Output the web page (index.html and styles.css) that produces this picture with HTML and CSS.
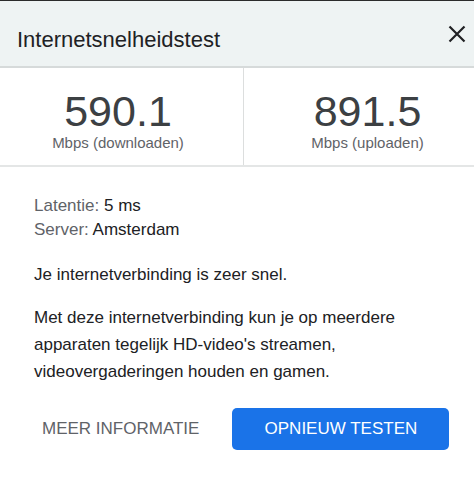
FILE: index.html
```html
<!DOCTYPE html>
<html lang="nl">
<head>
<meta charset="utf-8">
<title>Internetsnelheidstest</title>
<link rel="stylesheet" href="styles.css">
</head>
<body>
<div class="topbar"></div>
<div class="dialog">
  <header class="header">
    <h1 class="title">Internetsnelheidstest</h1>
    <button class="close" aria-label="Sluiten">
      <svg width="18" height="18" viewBox="0 0 18 18"><path d="M1.5 1.5 L16.5 16.5 M16.5 1.5 L1.5 16.5" stroke="#202124" stroke-width="2.2" fill="none"/></svg>
    </button>
  </header>
  <section class="stats">
    <div class="stat stat-down">
      <div class="value">590.1</div>
      <div class="unit">Mbps (downloaden)</div>
    </div>
    <div class="stat stat-up">
      <div class="value">891.5</div>
      <div class="unit">Mbps (uploaden)</div>
    </div>
  </section>
  <section class="content">
    <div class="info">
      <div><span class="label">Latentie:</span> 5 ms</div>
      <div><span class="label">Server:</span> Amsterdam</div>
    </div>
    <p class="verdict">Je internetverbinding is zeer snel.</p>
    <p class="desc">Met deze internetverbinding kun je op meerdere apparaten tegelijk HD-video's streamen, videovergaderingen houden en gamen.</p>
    <div class="actions">
      <button class="btn btn-text">MEER INFORMATIE</button>
      <button class="btn btn-primary">OPNIEUW TESTEN</button>
    </div>
  </section>
</div>
</body>
</html>
```

FILE: styles.css
```css
html, body {
  margin: 0;
  padding: 0;
}
body {
  width: 474px;
  height: 478px;
  overflow: hidden;
  background: #ffffff;
  font-family: "Liberation Sans", Arial, sans-serif;
  color: #202124;
}
.topbar {
  height: 1px;
  background: #2b2b2b;
}
.dialog {
  width: 474px;
}
.header {
  display: flex;
  justify-content: space-between;
  align-items: flex-start;
  height: 67px;
  box-sizing: border-box;
  padding: 26px 8px 0 17px;
  background: #eef3f3;
  border-bottom: 2px solid #d6dada;
}
.title {
  margin: 0;
  font-size: 22px;
  line-height: 26px;
  font-weight: 400;
  color: #202124;
}
.close {
  margin-top: -2px;
  padding: 0;
  border: 0;
  background: none;
  width: 18px;
  height: 18px;
  display: flex;
}
.stats {
  display: grid;
  grid-template-columns: 244px 1fr;
  border-bottom: 2px solid #e4e6e6;
}
.stat {
  text-align: center;
  padding: 23px 0 13px;
}
.stat-down {
  border-right: 1px solid #dcdede;
  padding-right: 7px;
}
.stat-up {
  padding-left: 17px;
}
.value {
  font-size: 43px;
  line-height: 40px;
  color: #3c4043;
}
.unit {
  margin-top: 3px;
  font-size: 15px;
  line-height: 18px;
  color: #5f6368;
}
.content {
  padding: 27px 0 0 34px;
  font-size: 17px;
}
.info {
  line-height: 24px;
}
.label {
  color: #5f6368;
}
.verdict {
  margin: 21px 0 0;
  line-height: 24px;
}
.desc {
  margin: 17px 0 0;
  line-height: 27px;
  width: 420px;
}
.actions {
  display: flex;
  align-items: center;
  gap: 25px;
  margin-top: 23px;
}
.btn {
  font-family: "Liberation Sans", Arial, sans-serif;
  font-size: 17px;
  border: 0;
  cursor: pointer;
}
.btn-text {
  background: none;
  color: #5f6368;
  padding: 0 8px;
  height: 42px;
}
.btn-primary {
  background: #1a73e8;
  color: #ffffff;
  height: 42px;
  width: 217px;
  border-radius: 5px;
}
```
